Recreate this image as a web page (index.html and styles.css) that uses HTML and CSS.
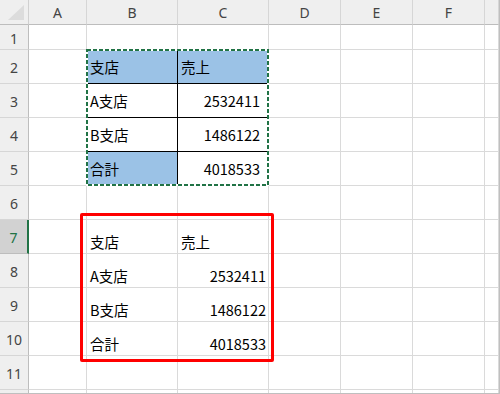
FILE: index.html
```html
<!DOCTYPE html>
<html lang="ja">
<head>
<meta charset="utf-8">
<link rel="stylesheet" href="styles.css">
</head>
<body>
<div class="sheet">
  <div class="corner"><svg width="28" height="24" viewBox="0 0 28 24"><polygon points="8,20 24,20 24,5" fill="#dcdcdc"/></svg></div>
  <div class="ch">A</div><div class="ch">B</div><div class="ch">C</div><div class="ch">D</div><div class="ch">E</div><div class="ch">F</div><div class="ch"></div>

  <div class="rh">1</div><div class="c"></div><div class="c"></div><div class="c"></div><div class="c"></div><div class="c"></div><div class="c"></div><div class="c"></div>

  <div class="rh">2</div><div class="c"></div><div class="c t fill bb br">支店</div><div class="c t fill bb br">売上</div><div class="c"></div><div class="c"></div><div class="c"></div><div class="c"></div>

  <div class="rh">3</div><div class="c"></div><div class="c t bb br">A支店</div><div class="c t num bb br">2532411</div><div class="c"></div><div class="c"></div><div class="c"></div><div class="c"></div>

  <div class="rh">4</div><div class="c"></div><div class="c t bb br">B支店</div><div class="c t num bb br">1486122</div><div class="c"></div><div class="c"></div><div class="c"></div><div class="c"></div>

  <div class="rh">5</div><div class="c"></div><div class="c t fill br">合計</div><div class="c t num br">4018533</div><div class="c"></div><div class="c"></div><div class="c"></div><div class="c"></div>

  <div class="rh">6</div><div class="c"></div><div class="c"></div><div class="c"></div><div class="c"></div><div class="c"></div><div class="c"></div><div class="c"></div>

  <div class="rh sel">7</div><div class="c"></div><div class="c l">支店</div><div class="c l">売上</div><div class="c"></div><div class="c"></div><div class="c"></div><div class="c"></div>

  <div class="rh">8</div><div class="c"></div><div class="c l">A支店</div><div class="c l lnum">2532411</div><div class="c"></div><div class="c"></div><div class="c"></div><div class="c"></div>

  <div class="rh">9</div><div class="c"></div><div class="c l">B支店</div><div class="c l lnum">1486122</div><div class="c"></div><div class="c"></div><div class="c"></div><div class="c"></div>

  <div class="rh">10</div><div class="c"></div><div class="c l">合計</div><div class="c l lnum">4018533</div><div class="c"></div><div class="c"></div><div class="c"></div><div class="c"></div>

  <div class="rh">11</div><div class="c"></div><div class="c"></div><div class="c"></div><div class="c"></div><div class="c"></div><div class="c"></div><div class="c"></div>

  <div class="rh last"></div><div class="c last"></div><div class="c last"></div><div class="c last"></div><div class="c last"></div><div class="c last"></div><div class="c last"></div><div class="c last"></div>

  <svg class="marquee" width="183" height="137" viewBox="0 0 183 137">
    <rect x="1" y="1" width="181" height="135" fill="none" stroke="#ffffff" stroke-width="2"/>
    <rect x="1" y="1" width="181" height="135" fill="none" stroke="#217346" stroke-width="2" stroke-dasharray="4 2"/>
  </svg>
  <div class="redbox"></div>
</div>
</body>
</html>
```

FILE: styles.css
```css
html, body {
  margin: 0;
  padding: 0;
  background: #ffffff;
}

.sheet {
  position: relative;
  width: 500px;
  height: 394px;
  box-sizing: border-box;
  border-right: 1px solid #bfbfbf;
  border-bottom: 1px solid #bfbfbf;
  display: grid;
  grid-template-columns: 29px 58px 91px 91px 72px 72px 72px 1fr;
  grid-template-rows: 25px 25px repeat(10, 34px) 1fr;
  overflow: hidden;
  font-family: "Noto Sans CJK JP", sans-serif;
  font-size: 14.5px;
  color: #000000;
}

.sheet > div {
  box-sizing: border-box;
  overflow: hidden;
  display: flex;
  align-items: center;
  white-space: nowrap;
}

.corner {
  background: #efefef;
  border-right: 1px solid #d0d0d0;
  border-bottom: 1px solid #bdbdbd;
}

.corner svg {
  display: block;
}

.ch {
  background: #efefef;
  border-right: 1px solid #d6d6d6;
  border-bottom: 1px solid #bdbdbd;
  justify-content: center;
  color: #444444;
  font-family: "Noto Sans", "Noto Sans CJK JP", sans-serif;
  font-size: 14px;
  padding-top: 1px;
}

.rh {
  background: #efefef;
  border-right: 1px solid #bdbdbd;
  border-bottom: 1px solid #d6d6d6;
  justify-content: center;
  color: #444444;
  font-family: "Noto Sans", "Noto Sans CJK JP", sans-serif;
  font-size: 14px;
  padding-top: 2px;
}

.rh.sel {
  background: #d2d2d2;
  color: #217346;
  border-right: 2px solid #217346;
  border-bottom-color: #bdbdbd;
}

.c {
  border-right: 1px solid #dadada;
  border-bottom: 1px solid #dadada;
}

.last {
  border-bottom: none;
}

.t {
  padding: 0 3px;
}

.fill {
  background: #9bc2e6;
}

.bb {
  border-bottom-color: #000000;
}

.br {
  border-right-color: #000000;
}

.num {
  justify-content: flex-end;
  padding-right: 8px;
}

.l {
  padding: 9px 3px 0 3px;
}

.lnum {
  justify-content: flex-end;
  padding-right: 2px;
}

.marquee {
  position: absolute;
  left: 86px;
  top: 49px;
}

.redbox {
  position: absolute;
  left: 80px;
  top: 213px;
  width: 194px;
  height: 149px;
  box-sizing: border-box;
  border: 3px solid #ff0000;
  border-radius: 2px;
}
```
